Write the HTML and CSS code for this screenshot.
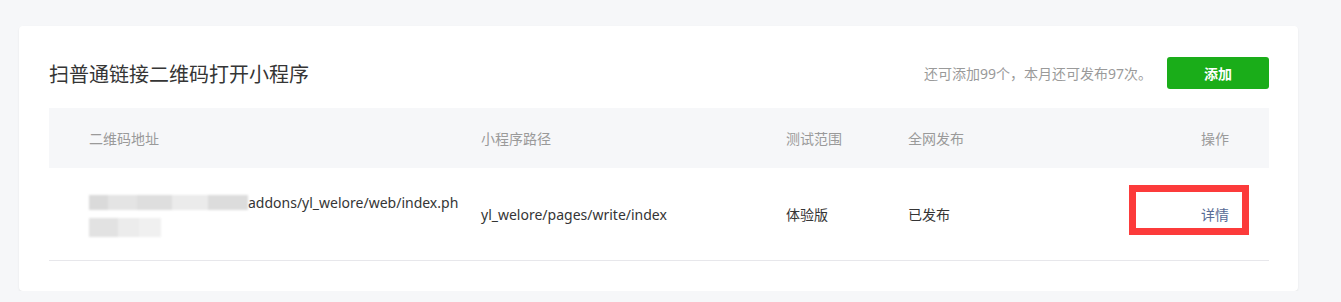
FILE: index.html
```html
<!DOCTYPE html>
<html lang="zh-CN">
<head>
    <meta charset="UTF-8">
    <meta name="viewport" content="width=device-width, initial-scale=1.0">
    <title>扫普通链接二维码打开小程序</title>
    <link rel="stylesheet" href="styles.css">
</head>
<body>
    <div class="card">
        <div class="card-head">
            <h2>扫普通链接二维码打开小程序</h2>
            <div class="head-tools">
                <span class="quota">还可添加99个，本月还可发布97次。</span>
                <button class="add-btn">添加</button>
            </div>
        </div>

        <div class="table">
            <div class="row head">
                <div class="cell first">二维码地址</div>
                <div class="cell">小程序路径</div>
                <div class="cell">测试范围</div>
                <div class="cell">全网发布</div>
                <div class="cell op">操作</div>
            </div>
            <div class="row body">
                <div class="cell first url">
                    <span class="line"><span class="mosaic m1"></span>addons/yl_welore/web/index.ph</span>
                    <span class="line"><span class="mosaic m2"></span></span>
                </div>
                <div class="cell">yl_welore/pages/write/index</div>
                <div class="cell">体验版</div>
                <div class="cell">已发布</div>
                <div class="cell op">
                    <a href="#" class="link">详情</a>
                    <span class="mark"></span>
                </div>
            </div>
        </div>
    </div>
</body>
</html>
```

FILE: styles.css
```css
body {
    margin: 0;
    padding: 26px 43px 0 19px;
    background-color: #f6f7f9;
    font-family: "Noto Sans", "Noto Sans CJK SC", sans-serif;
    font-size: 14px;
    color: #353535;
}
.card {
    background-color: #fff;
    border-radius: 4px;
    box-shadow: 0 1px 2px rgba(0, 0, 0, 0.08);
    padding: 31px 29px 30px 30px;
}
.card-head {
    display: flex;
    justify-content: space-between;
    align-items: center;
    height: 32px;
    margin-bottom: 19px;
}
.card-head h2 {
    margin: 0;
    font-size: 20px;
    font-weight: normal;
    color: #353535;
}
.head-tools {
    display: flex;
    align-items: center;
    gap: 15px;
}
.quota {
    color: #9a9a9a;
    font-size: 14px;
}
.add-btn {
    width: 102px;
    height: 32px;
    border: none;
    border-radius: 3px;
    background-color: #1aad19;
    color: #fff;
    font-family: inherit;
    font-size: 14px;
    font-weight: bold;
    cursor: pointer;
}
.row {
    display: grid;
    grid-template-columns: 432px 305px 122px 1fr 160px;
    align-items: center;
}
.row.head {
    height: 60px;
    background-color: #f6f7f9;
    color: #9a9a9a;
}
.row.body {
    height: 92px;
    border-bottom: 1px solid #e7e7eb;
}
.cell.first {
    padding-left: 40px;
}
.cell.op {
    text-align: right;
    padding-right: 40px;
    position: relative;
}
.url {
    display: flex;
    flex-direction: column;
    gap: 5px;
    margin-top: 2px;
}
.line {
    display: flex;
    align-items: center;
    height: 20px;
}
.mosaic {
    display: inline-block;
    height: 15px;
    filter: blur(1px);
}
.m1 {
    width: 159px;
    background: linear-gradient(90deg, #dadada 0 12%, #e4e4e4 12% 30%, #dedede 30% 52%, #ebebeb 52% 75%, #dcdcdc 75% 100%);
}
.m2 {
    width: 72px;
    height: 19px;
    background: linear-gradient(90deg, #e2e2e2 0 40%, #ececec 40% 70%, #f0f0f0 70% 100%);
}
.link {
    color: #576b95;
    text-decoration: none;
}
.mark {
    position: absolute;
    right: 20px;
    top: -19px;
    width: 106px;
    height: 36px;
    border: 7px solid #fc3b3b;
}
```
